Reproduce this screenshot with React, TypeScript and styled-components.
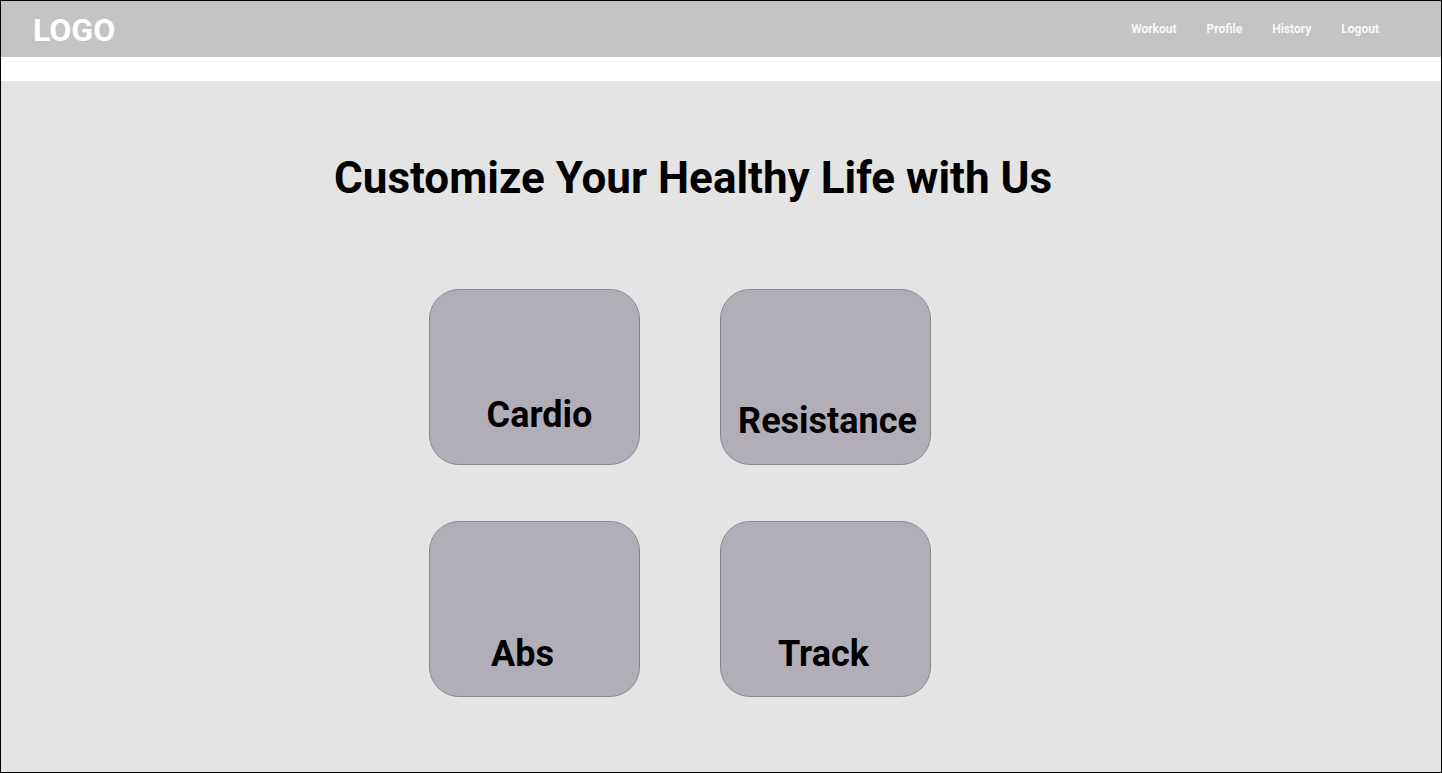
import React from "react";
import styled, { createGlobalStyle } from "styled-components";

const GlobalStyle = createGlobalStyle`
  html, body {
    margin: 0;
    padding: 0;
    background: #ffffff;
  }
  * {
    box-sizing: border-box;
  }
`;

type Category = {
  name: string;
  dx: number;
  bottom: number;
};

const categories: Category[] = [
  { name: "Cardio", dx: 5, bottom: 31 },
  { name: "Resistance", dx: 2, bottom: 25 },
  { name: "Abs", dx: -12, bottom: 24 },
  { name: "Track", dx: -2, bottom: 24 },
];

const navLinks = ["Workout", "Profile", "History", "Logout"];

export default function App() {
  return (
    <>
      <GlobalStyle />
      <Frame>
        <Header>
          <Logo>LOGO</Logo>
          <Nav>
            {navLinks.map((link) => (
              <NavLink key={link}>{link}</NavLink>
            ))}
          </Nav>
        </Header>
        <Spacer />
        <Main>
          <Title>Customize Your Healthy Life with Us</Title>
          <CardGrid>
            {categories.map((c) => (
              <Card key={c.name} $bottom={c.bottom}>
                <CardLabel $dx={c.dx}>{c.name}</CardLabel>
              </Card>
            ))}
          </CardGrid>
        </Main>
      </Frame>
    </>
  );
}

const Frame = styled.div`
  width: 1442px;
  height: 773px;
  border: 1px solid #000000;
  display: flex;
  flex-direction: column;
  font-family: Roboto, "Liberation Sans", sans-serif;
  overflow: hidden;
`;

const Header = styled.header`
  height: 56px;
  flex-shrink: 0;
  background: #c4c4c4;
  display: flex;
  align-items: center;
  justify-content: space-between;
  padding: 0 62px 0 32px;
`;

const Logo = styled.div`
  font-size: 32px;
  font-weight: 700;
  color: #ffffff;
  line-height: 1;
  margin-top: 1px;
`;

const Nav = styled.nav`
  display: flex;
  gap: 30px;
`;

const NavLink = styled.a`
  font-size: 12px;
  font-weight: 700;
  color: #f8f8f8;
  cursor: pointer;
`;

const Spacer = styled.div`
  height: 24px;
  flex-shrink: 0;
  background: #ffffff;
`;

const Main = styled.main`
  flex: 1;
  background: #e4e4e4;
  padding: 75px 0 0 333px;
`;

const Title = styled.h1`
  margin: 0;
  font-size: 44px;
  line-height: 1;
  font-weight: 700;
  color: #000000;
`;

const CardGrid = styled.div`
  display: grid;
  grid-template-columns: 211px 211px;
  grid-auto-rows: 176px;
  column-gap: 80px;
  row-gap: 56px;
  margin: 89px 0 0 95px;
`;

const Card = styled.div<{ $bottom: number }>`
  background: #b2aeb7;
  border: 1px solid #8a868e;
  border-radius: 30px;
  display: flex;
  flex-direction: column;
  justify-content: flex-end;
  align-items: center;
  padding-bottom: ${({ $bottom }) => $bottom}px;
`;

const CardLabel = styled.div<{ $dx: number }>`
  font-size: 36px;
  font-weight: 700;
  line-height: 1;
  color: #000000;
  margin-left: ${({ $dx }) => $dx * 2}px;
`;
